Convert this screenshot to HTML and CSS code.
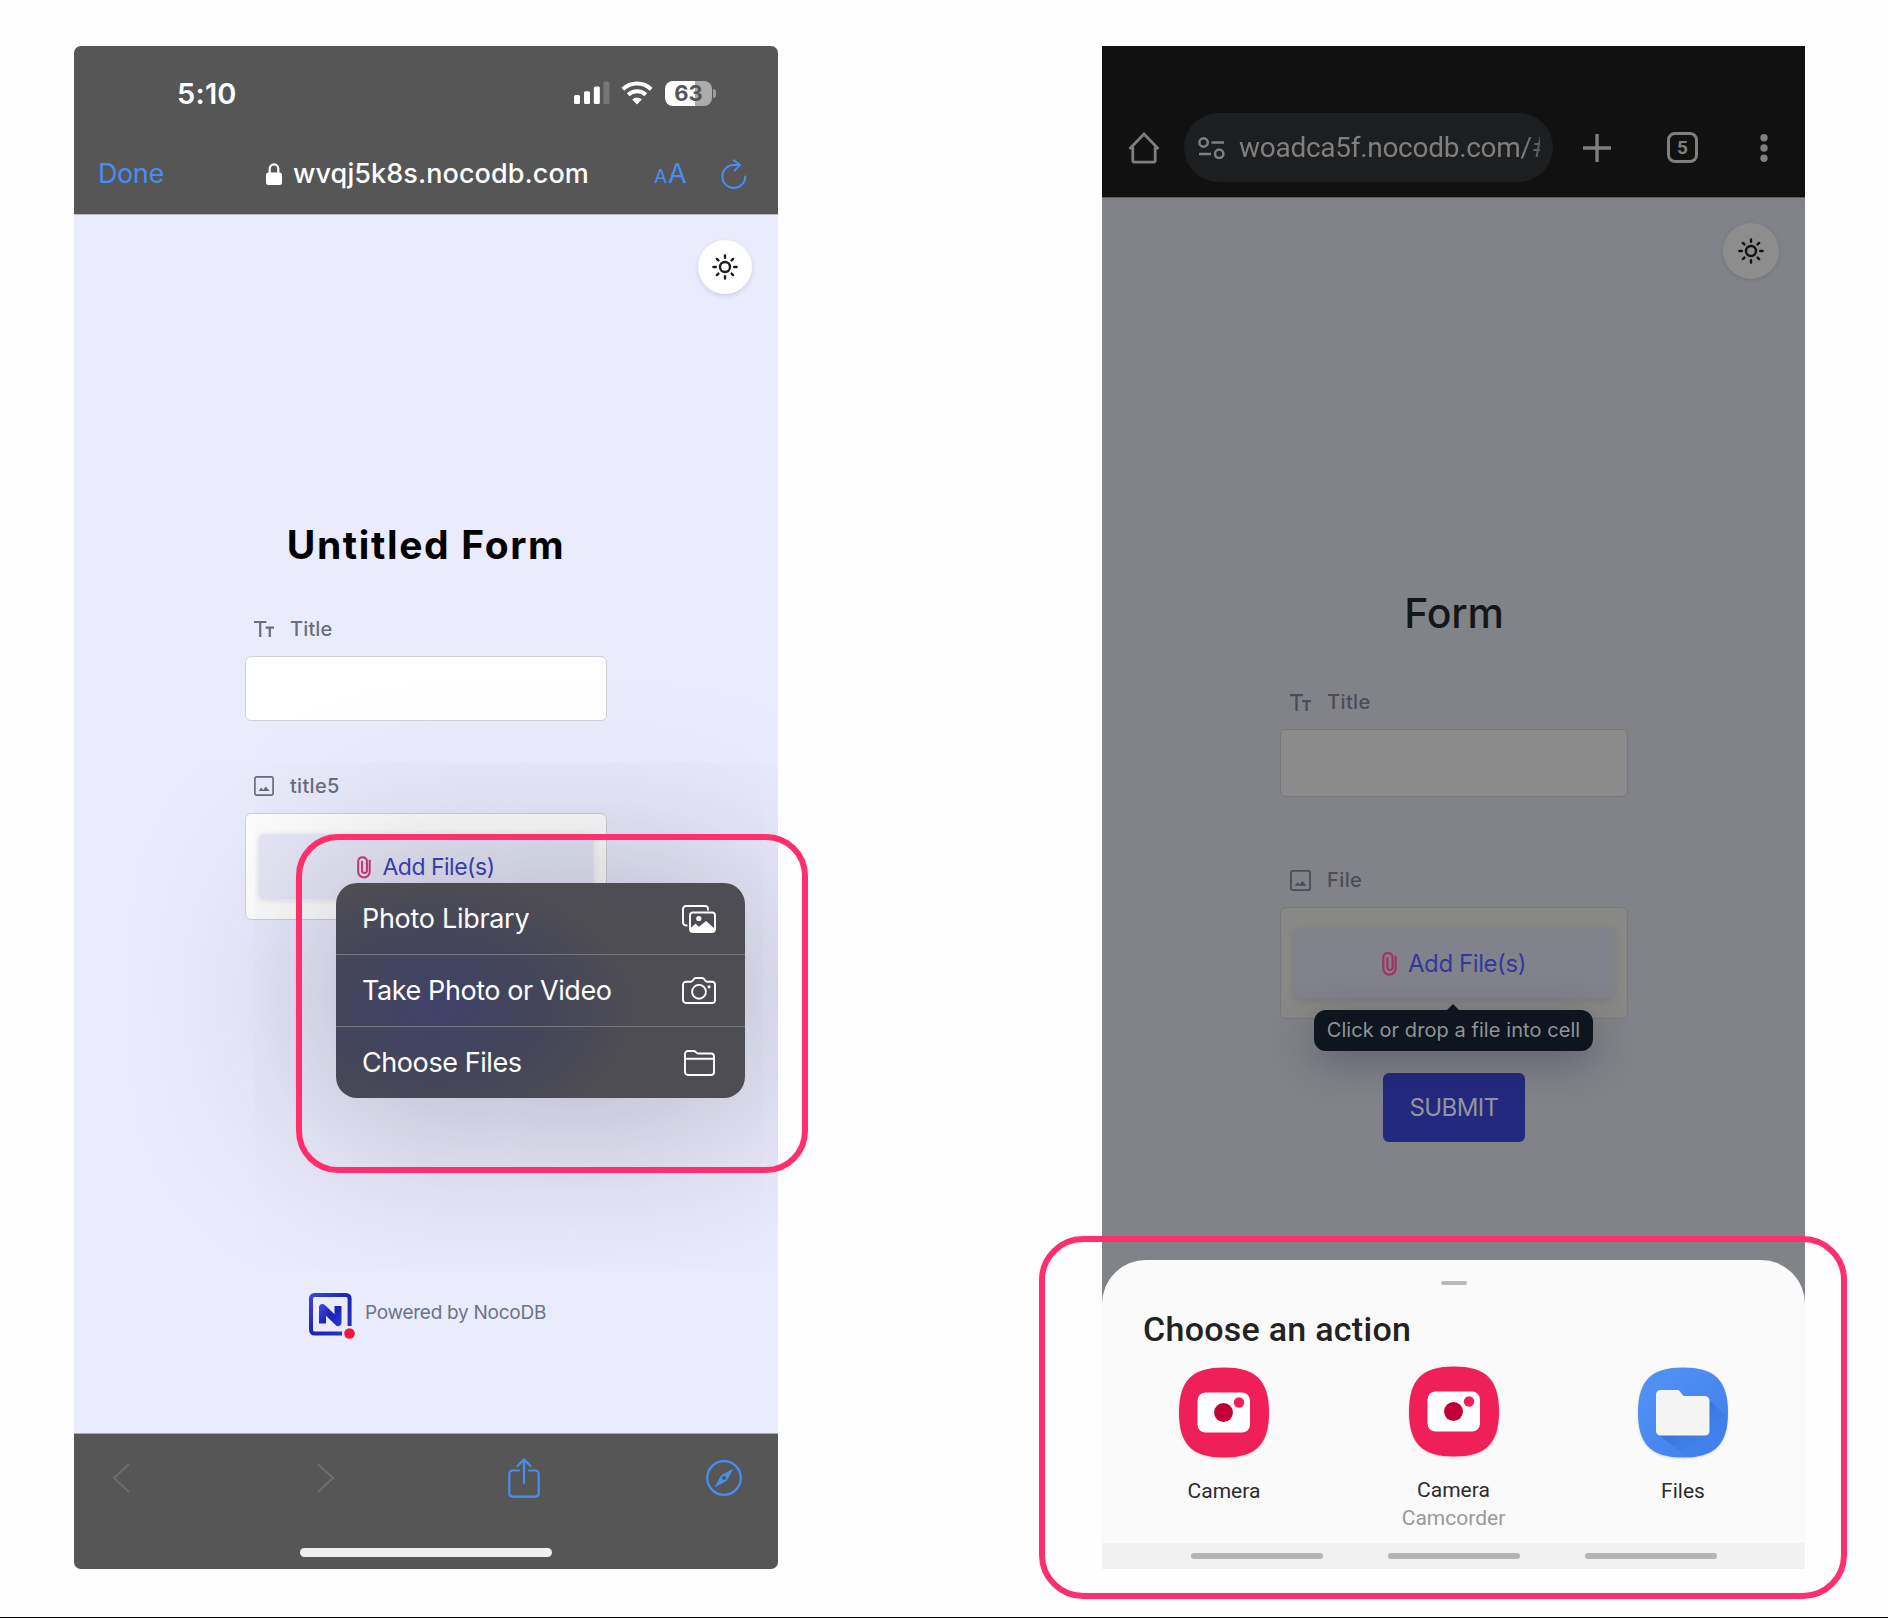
FILE: index.html
```html
<!DOCTYPE html>
<html lang="en">
<head>
<meta charset="utf-8">
<title>Form attachments on mobile</title>
<link rel="stylesheet" href="styles.css">
</head>
<body>
<svg class="defs" width="0" height="0">
  <defs>
    <symbol id="sun" viewBox="0 0 26 26"><g fill="none" stroke="currentColor" stroke-width="2.4" stroke-linecap="round"><circle cx="13" cy="13" r="5"/><path d="M13 1.4v2.4M13 22.2v2.4M1.4 13h2.4M22.2 13h2.4M4.9 4.9l1.5 1.5M19.6 19.6l1.5 1.5M4.9 21.1l1.5-1.5M19.6 6.4l1.5-1.5"/></g></symbol>
    <symbol id="text-type" viewBox="0 0 20 16"><path d="M0 0h12.4v2.100H7.300v13.900H5.100V2.100H0zM11.600 5.500H20v2.200h-3.100V16h-2.200V7.700h-3.100z" fill="currentColor"/></symbol>
    <symbol id="image" viewBox="0 0 20 20"><rect x=".9" y=".9" width="18.2" height="18.2" rx="1.6" fill="none" stroke="currentColor" stroke-width="1.7"/><path d="M4.6 15l2.6-3.4 2 2.3 2.6-3.5 3.8 4.6z" fill="currentColor"/></symbol>
    <symbol id="clip" viewBox="0 0 15 25"><path d="M13.600 5.500v12a6.100 6.100 0 0 1-12.300 0V6a4.700 4.700 0 0 1 9.300 0v11a2.700 2.700 0 0 1-5.200 0V7" fill="none" stroke="currentColor" stroke-width="2.200" stroke-linecap="round"/></symbol>
    <symbol id="camera-app" viewBox="0 0 90 90"><path d="M45 0C77 0 90 13 90 45S77 90 45 90 0 77 0 45 13 0 45 0z" fill="#ef1f57"/><rect x="18.500" y="25" width="52.500" height="40" rx="8" fill="#fff"/><circle cx="44.500" cy="45" r="9.400" fill="#c00036"/><circle cx="60" cy="35" r="5.200" fill="#ef1f57"/></symbol>
    <linearGradient id="filesBg" x1="0" y1="0" x2="1" y2="1"><stop offset="0" stop-color="#5493f5"/><stop offset="1" stop-color="#3f7eea"/></linearGradient>
    <linearGradient id="folderShade" x1="0" y1="0" x2="1" y2="1"><stop offset=".4" stop-color="#2f68cf" stop-opacity=".6"/><stop offset=".85" stop-color="#3f7eea" stop-opacity="0"/></linearGradient>
    <linearGradient id="logoBlue" x1="0" y1="0" x2="1" y2="1"><stop offset="0" stop-color="#3b45dc"/><stop offset=".5" stop-color="#1c22b4"/><stop offset="1" stop-color="#2a32d0"/></linearGradient>
  </defs>
</svg>
<main class="board">
  <section class="phone ios">
    <header class="ios-head">
      <div class="status">
        <span class="time">5:10</span>
        <div class="status-icons">
          <svg width="36" height="24" viewBox="0 0 36 24"><g fill="#fff"><rect y="14" width="6" height="9" rx="1.500"/><rect x="10" y="10.200" width="6" height="12.800" rx="1.500"/><rect x="19.800" y="5.500" width="6" height="17.500" rx="1.500"/><rect x="29.500" y=".5" width="6" height="22.500" rx="1.500" opacity=".2"/></g></svg>
          <svg class="wifi" width="32" height="24" viewBox="0 0 32 24"><g fill="none" stroke="#fff" stroke-width="4"><path d="M1.800 8.200a20.500 20.500 0 0 1 28.400 0"/><path d="M7.200 13.700a12.800 12.800 0 0 1 17.600 0"/></g><path d="M16 23.500l-4.800-5a7 7 0 0 1 9.600 0z" fill="#fff"/></svg>
          <div class="battery"><span>63</span></div><i class="nub"></i>
        </div>
      </div>
      <div class="ios-url">
        <span class="done">Done</span>
        <div class="host"><svg width="16" height="22" viewBox="0 0 16 22"><rect y="9.500" width="16" height="12.500" rx="2.500" fill="#fff"/><path d="M3.700 10V6a4.300 4.600 0 0 1 8.600 0v4" fill="none" stroke="#fff" stroke-width="2.200"/></svg><span class="host-text">wvqj5k8s.nocodb.com</span></div>
        <div class="aa"><span class="aa-s">A</span><span class="aa-l">A</span></div>
        <svg class="reload" width="26" height="30" viewBox="0 0 26 30"><path d="M24.300 17.500A11.500 11.500 0 1 1 12.800 6h6M12.800 1.300L19 6l-5.500 5.600" fill="none" stroke="#4a8df0" stroke-width="2" stroke-linecap="round" stroke-linejoin="round"/></svg>
      </div>
    </header>
    <div class="ios-page">
      <div class="theme-btn"><svg width="26" height="26"><use href="#sun"/></svg></div>
      <h1 class="title">Untitled Form</h1>
      <div class="form">
        <div class="label"><svg width="20" height="16"><use href="#text-type"/></svg><span>Title</span></div>
        <div class="field"></div>
        <div class="label second"><svg width="20" height="20"><use href="#image"/></svg><span>title5</span></div>
        <div class="field drop"><div class="drop-in"><svg width="14" height="24"><use href="#clip"/></svg><span class="add">Add File(s)</span></div></div>
      </div>
      <div class="brand">
        <svg width="46" height="46" viewBox="0 0 46 46"><path d="M40.600 33V5.500a3.500 3.500 0 0 0-3.500-3.500H5.500A3.500 3.500 0 0 0 2 5.500v31.600a3.500 3.500 0 0 0 3.500 3.500H33" fill="none" stroke="url(#logoBlue)" stroke-width="4"/><path d="M13.500 30.500V14.500L29 29.500V13" fill="none" stroke="url(#logoBlue)" stroke-width="7" stroke-linejoin="round"/><circle cx="40.500" cy="40.500" r="5.300" fill="#f5153f"/></svg>
        <span class="powered">Powered by NocoDB</span>
      </div>
    </div>
    <footer class="ios-foot">
      <div class="tools">
        <svg width="18" height="30" viewBox="0 0 18 30"><path d="M16.500 1.500L2 15l14.500 13.500" fill="none" stroke="#6d6d6d" stroke-width="2" stroke-linecap="round"/></svg>
        <svg class="forward" width="18" height="30" viewBox="0 0 18 30"><path d="M1.500 1.500L16 15 1.500 28.500" fill="none" stroke="#6d6d6d" stroke-width="2" stroke-linecap="round"/></svg>
        <svg class="share" width="32" height="40" viewBox="0 0 32 40"><path d="M11 12.500H4.500a3.200 3.200 0 0 0-3.200 3.200V35.500a3.200 3.200 0 0 0 3.200 3.200h23a3.200 3.200 0 0 0 3.200-3.200V15.700a3.200 3.200 0 0 0-3.200-3.200H21M16 25V1.500M9.500 8L16 1.500 22.500 8" fill="none" stroke="#4a8df0" stroke-width="2.200" stroke-linecap="round" stroke-linejoin="round"/></svg>
        <svg width="36" height="36" viewBox="0 0 36 36"><circle cx="18" cy="18" r="16.800" fill="none" stroke="#4a8df0" stroke-width="2.200"/><path d="M27.500 8.500L20.800 20.800 8.500 27.500 15.200 15.200z" fill="#4a8df0"/><circle cx="18" cy="18" r="2" fill="#565656"/></svg>
      </div>
      <div class="home-bar"></div>
    </footer>
    <div class="menu">
      <div class="item"><span>Photo Library</span><svg width="34" height="28" viewBox="0 0 34 28"><path d="M5.500 20.500H4A3 3 0 0 1 1 17.500V4A3 3 0 0 1 4 1h19a3 3 0 0 1 3 3v1.500" fill="none" stroke="#fff" stroke-width="1.900"/><rect x="8" y="7.500" width="25" height="19.500" rx="3" fill="none" stroke="#fff" stroke-width="1.900"/><circle cx="16.800" cy="13.500" r="2.600" fill="#fff"/><path d="M8.500 23l5-4.200 3.500 3 7-5.800 8.500 7.500V25a2 2 0 0 1-2 2h-20a2 2 0 0 1-2-2z" fill="#fff"/></svg></div>
      <div class="item"><span>Take Photo or Video</span><svg width="34" height="27" viewBox="0 0 34 27"><g fill="none" stroke="#fff" stroke-width="1.900"><path d="M4 4.800h4.500c1.200 0 1.800-.6 2.500-1.600l.6-.9C12.300 1.300 12.900 1 14 1h6c1.100 0 1.700.3 2.400 1.300l.6.900c.7 1 1.300 1.600 2.500 1.600H30a3 3 0 0 1 3 3V23a3 3 0 0 1-3 3H4a3 3 0 0 1-3-3V7.800a3 3 0 0 1 3-3z"/><circle cx="17" cy="14.800" r="6.900"/></g><circle cx="27" cy="9.800" r="1.600" fill="#fff"/></svg></div>
      <div class="item"><span>Choose Files</span><svg class="folder" width="31" height="26" viewBox="0 0 31 26"><path d="M1 8.800h29M4 1h5.500c1 0 1.600.3 2.300 1l.8.700c.6.500 1.100.8 2 .8H27a3 3 0 0 1 3 3V22a3 3 0 0 1-3 3H4a3 3 0 0 1-3-3V4a3 3 0 0 1 3-3z" fill="none" stroke="#fff" stroke-width="1.900"/></svg></div>
    </div>
  </section>

  <section class="phone android">
    <header class="and-head">
      <svg width="32" height="32" viewBox="0 0 32 32"><path d="M1.500 17L16 2l14.500 15M4.800 15v13.200a2 2 0 0 0 2 2h18.400a2 2 0 0 0 2-2V15" fill="none" stroke="#7f7f7f" stroke-width="2.800"/></svg>
      <div class="omnibox">
        <svg width="27" height="22" viewBox="0 0 27 22"><g fill="none" stroke="#7f7f7f" stroke-width="2.500"><circle cx="5.600" cy="5.500" r="4.200"/><path d="M13.500 5.500H26M1 17h12"/><circle cx="21.200" cy="16.800" r="4.200"/></g></svg>
        <span class="and-url">woadca5f.nocodb.com/#</span>
      </div>
      <svg class="plus" width="28" height="28" viewBox="0 0 28 28"><path d="M14 0v28M0 14h28" stroke="#7f7f7f" stroke-width="3.400"/></svg>
      <div class="tabs">5</div>
      <svg class="dots" width="8" height="28" viewBox="0 0 8 28"><g fill="#7f7f7f"><circle cx="4" cy="3.700" r="3.700"/><circle cx="4" cy="14" r="3.700"/><circle cx="4" cy="24.300" r="3.700"/></g></svg>
    </header>
    <div class="and-page">
      <div class="theme-btn"><svg width="26" height="26"><use href="#sun"/></svg></div>
      <h1 class="title">Form</h1>
      <div class="form">
        <div class="label"><svg width="21" height="17"><use href="#text-type"/></svg><span>Title</span></div>
        <div class="field"></div>
        <div class="label second"><svg width="21" height="21"><use href="#image"/></svg><span>File</span></div>
        <div class="field drop"><div class="drop-in"><svg width="15" height="25"><use href="#clip"/></svg><span class="add">Add File(s)</span></div></div>
        <button class="submit">SUBMIT</button>
        <div class="tooltip">Click or drop a file into cell</div>
      </div>
    </div>
    <div class="sheet">
      <div class="handle"></div>
      <h2>Choose an action</h2>
      <div class="apps">
        <div class="app"><svg width="90" height="91"><use href="#camera-app"/></svg><span>Camera</span></div>
        <div class="app mid"><svg width="90" height="91"><use href="#camera-app"/></svg><span>Camera</span><small>Camcorder</small></div>
        <div class="app"><svg width="90" height="91" viewBox="0 0 90 90"><path d="M45 0C77 0 90 13 90 45S77 90 45 90 0 77 0 45 13 0 45 0z" fill="url(#filesBg)"/><path d="M71 32L88.500 49C87 76 75 89 50 90L20 67z" fill="url(#folderShade)"/><path d="M22.500 22.500H39c1.200 0 2 .4 2.800 1.300l3.700 4.800H67a4.500 4.500 0 0 1 4.500 4.500v30.500a4.500 4.500 0 0 1-4.500 4.500H22.500A4.500 4.500 0 0 1 18 63.600V27a4.500 4.500 0 0 1 4.500-4.500z" fill="#f4f4f4"/></svg><span>Files</span></div>
      </div>
      <div class="nav"><i></i><i></i><i></i></div>
    </div>
  </section>
  <div class="mark mark-left"></div>
  <div class="mark mark-right"></div>
</main>
</body>
</html>
```
FILE: styles.css
```css
* { box-sizing: border-box; }
body {
  margin: 0;
  background: #fefefe;
  font-family: Inter, "Liberation Sans", sans-serif;
}
svg { display: block; flex: none; }
h1, h2 { margin: 0; }
.defs { position: absolute; }
.board {
  position: relative;
  display: flex;
  gap: 324px;
  height: 1618px;
  padding: 46px 83px 0 74px;
  border-bottom: 1px solid #000;
  overflow: hidden;
}
.phone {
  position: relative;
  display: flex;
  flex-direction: column;
  flex: none;
  height: 1523px;
  overflow: hidden;
}
.ios { width: 704px; border-radius: 7px; background: #eaebfc; }
.android { width: 703px; background: #828289; }

/* iOS browser chrome */
.ios-head { height: 169px; background: #565656; border-bottom: 1px solid #b9b9c4; color: #fff; }
.status {
  display: flex;
  align-items: center;
  justify-content: space-between;
  height: 96px;
  padding: 0 62px 2px 103px;
}
.time { font-size: 29px; font-weight: 600; letter-spacing: .2px; }
.status-icons { display: flex; align-items: center; }
.wifi { margin-left: 11px; }
.battery {
  width: 47px;
  height: 25px;
  margin-left: 12px;
  border-radius: 8px;
  background: linear-gradient(90deg, #fff 64%, #acacac 64%);
  color: #565656;
  font-size: 22px;
  font-weight: 700;
  line-height: 25px;
  text-align: center;
}
.nub { width: 3px; height: 9px; margin-left: 1px; border-radius: 0 4px 4px 0; background: #9a9a9a; }
.ios-url {
  display: flex;
  align-items: center;
  height: 64px;
  padding: 0 30px 1px 24px;
  font-size: 27px;
}
.done, .aa { color: #4a8df0; }
.done { width: 168px; letter-spacing: -.4px; }
.host { display: flex; align-items: center; gap: 11px; width: 388px; font-weight: 500; letter-spacing: .08px; }
.aa { display: flex; align-items: baseline; gap: 1px; width: 67px; }
.aa-s { font-size: 19px; }
.aa-l { font-size: 27px; }

/* Form pages */
.ios-page { display: flex; flex-direction: column; height: 1218px; padding-top: 25px; }
.theme-btn {
  display: grid;
  place-items: center;
  align-self: flex-end;
  width: 54px;
  height: 54px;
  margin-right: 26px;
  border-radius: 50%;
  background: #fff;
  box-shadow: 0 2px 5px rgba(0, 0, 0, .12);
  color: #1c1c20;
}
.title { text-align: center; line-height: 60px; }
.ios .title { margin-top: 221px; font-size: 39px; font-weight: 700; letter-spacing: 1.65px; }
.ios .form { width: 362px; margin: 39px 0 0 171px; }
.label {
  display: flex;
  align-items: center;
  height: 30px;
  padding-left: 9px;
  color: #6a6d80;
  font-size: 20px;
  font-weight: 500;
  letter-spacing: .15px;
}
.label svg { margin-right: 16px; }
.field { height: 65px; margin-top: 12px; border: 1px solid #d0d0d8; border-radius: 6px; background: #fff; }
.ios .second { margin-top: 50px; letter-spacing: .3px; }
.ios .drop { height: 107px; padding: 20px 13px; }
.drop-in {
  display: flex;
  align-items: center;
  justify-content: center;
  gap: 11px;
  height: 65px;
  border-radius: 5px;
  background: #e8e8f8;
  box-shadow: 0 1px 6px rgba(90, 90, 140, .18);
}
.drop-in svg { color: #d0387c; }
.add { color: #3a42b8; font-size: 23px; letter-spacing: -.5px; }
.brand { display: flex; align-items: center; gap: 10px; margin: 373px 0 0 235px; }
.powered { margin-top: -7px; color: #6b7388; font-size: 19px; letter-spacing: -.27px; }

.ios-foot { height: 136px; background: #565656; border-top: 1px solid #a9a9b2; }
.tools { display: flex; align-items: center; height: 88px; padding: 0 0 1px 38px; }
.forward { margin-left: 187px; }
.share { margin: 0 166px 0 173px; }
.home-bar { width: 252px; height: 9px; margin: 26px auto 0; border-radius: 5px; background: #f0f0f0; }

.menu {
  position: absolute;
  left: 262px;
  top: 837px;
  width: 409px;
  height: 215px;
  border-radius: 21px;
  background: radial-gradient(ellipse 200px 130px at 24% 58%, #40426a 0%, #444559 55%, #4e4d53 100%);
  box-shadow: 0 6px 180px 26px rgba(40, 36, 50, .26);
  color: #fff;
  font-size: 27px;
  letter-spacing: -.42px;
}
.item { display: flex; align-items: center; justify-content: space-between; height: 72px; padding: 0 29px 0 26px; }
.item:first-child { height: 71px; letter-spacing: -.3px; }
.item + .item { border-top: 1px solid #77777e; }
.folder { margin-right: 1px; }

/* Android browser chrome, dimmed behind the sheet */
.and-head {
  display: flex;
  align-items: center;
  height: 151px;
  padding: 53px 37px 1px 26px;
  background: #111;
  font-family: Roboto, sans-serif;
}
.omnibox {
  display: flex;
  align-items: center;
  gap: 14px;
  width: 369px;
  height: 69px;
  margin-left: 24px;
  padding: 0 13px 0 14px;
  border-radius: 35px;
  background: #1d1e20;
}
.and-url {
  overflow: hidden;
  width: 301px;
  color: #7f7f7f;
  font-size: 28px;
  letter-spacing: -.28px;
  white-space: nowrap;
  -webkit-mask-image: linear-gradient(90deg, #000 94%, rgba(0, 0, 0, .6));
  mask-image: linear-gradient(90deg, #000 94%, rgba(0, 0, 0, .6));
}
.plus { margin-left: 30px; }
.tabs {
  width: 31px;
  height: 31px;
  margin-left: 56px;
  border: 3px solid #7f7f7f;
  border-radius: 8px;
  color: #7f7f7f;
  font-size: 19px;
  font-weight: 700;
  line-height: 25px;
  text-align: center;
}
.dots { margin-left: auto; }

.and-page { display: flex; flex-direction: column; padding-top: 25px; border-top: 1px solid #5d5d62; }
.android .theme-btn { width: 56px; height: 56px; background: #8d8d8d; color: #111; box-shadow: 0 1px 4px rgba(0, 0, 0, .12); }
.android .title { margin-top: 304px; padding-left: 1px; color: #151618; font-size: 41px; font-weight: 550; letter-spacing: -.2px; }
.android .form { position: relative; width: 348px; margin: 44px 0 0 178px; }
.android .label { color: #4c4c59; padding-left: 10px; letter-spacing: .4px; }
.android .field { height: 68px; border-color: #78787c; background: #8b8b8b; }
.android .second { margin-top: 68px; }
.android .drop { height: 112px; padding: 20px 13px; background: #888886; }
.android .drop-in { height: 70px; background: #82828d; box-shadow: 0 2px 6px rgba(90, 90, 110, .3); }
.android .drop-in svg { color: #9f3361; }
.android .add { color: #34389a; font-size: 24px; letter-spacing: -.42px; }
.submit {
  display: block;
  width: 142px;
  height: 69px;
  margin: 54px auto 0;
  padding: 0;
  border: 0;
  border-radius: 6px;
  background: #23297f;
  color: #94949f;
  font: 24px Inter, sans-serif;
  letter-spacing: -.6px;
}
.tooltip {
  position: absolute;
  left: 34px;
  top: 323px;
  width: 279px;
  height: 41px;
  border-radius: 12px;
  background: #0e151f;
  box-shadow: 0 10px 40px rgba(30, 30, 45, .35);
  color: #929396;
  font-size: 20px;
  letter-spacing: .07px;
  line-height: 41px;
  text-align: center;
  white-space: nowrap;
}
.tooltip::before {
  content: "";
  position: absolute;
  left: 133px;
  top: -6px;
  border: 6px solid transparent;
  border-top: 0;
  border-bottom-color: #0e151f;
}

/* Android action sheet */
.sheet {
  position: absolute;
  left: 0;
  right: 0;
  bottom: 0;
  height: 309px;
  border-radius: 44px 44px 0 0;
  background: #fafafa;
  font-family: Roboto, sans-serif;
}
.handle { width: 26px; height: 4px; margin: 21px auto 0; border-radius: 2px; background: #b9b9b9; }
.sheet h2 { margin: 24px 0 0 41px; color: #222; font-size: 34px; font-weight: 500; letter-spacing: .27px; line-height: 40px; }
.apps { display: flex; justify-content: space-between; height: 194px; padding: 18px 47px 0; }
.app { display: flex; flex-direction: column; align-items: center; width: 150px; color: #2c2c2c; font-size: 21px; }
.app svg { filter: drop-shadow(0 1px 1px rgba(0, 0, 0, .15)); }
.app span { margin-top: 19px; line-height: 28px; }
.app small { color: #999; font-size: 21px; line-height: 28px; }
.mid { margin-top: -1px; }
.nav { display: flex; justify-content: center; gap: 65px; height: 26px; padding-top: 10px; background: #f1f1f1; }
.nav i { width: 132px; height: 6px; border-radius: 3px; background: #b5b5b5; }

/* Highlight frames */
.mark { position: absolute; border: 6px solid #ff2f6d; }
.mark-left { left: 296px; top: 834px; width: 512px; height: 339px; border-radius: 42px; }
.mark-right { left: 1039px; top: 1236px; width: 808px; height: 363px; border-radius: 44px; }
```
